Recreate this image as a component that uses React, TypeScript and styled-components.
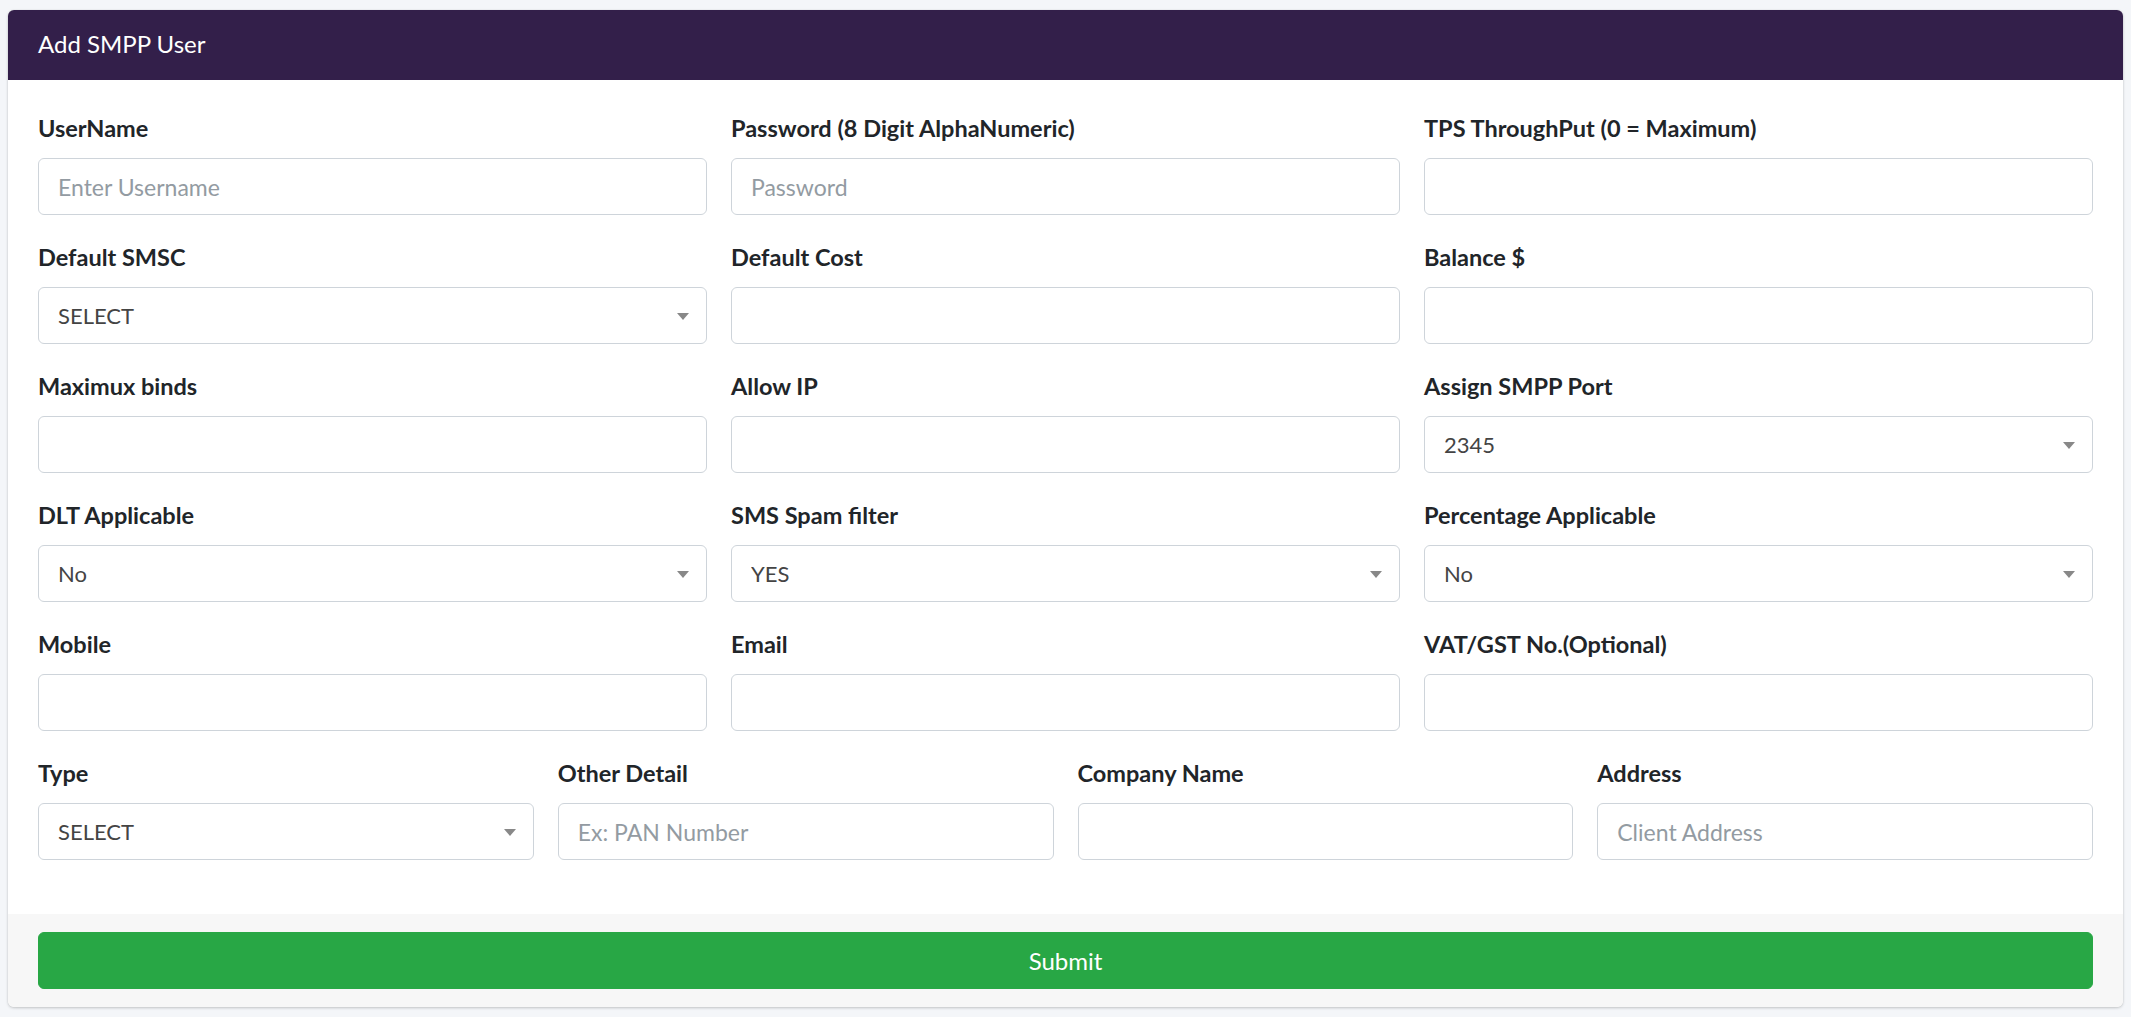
import styled, {createGlobalStyle} from "styled-components";

const GlobalStyle = createGlobalStyle`
  * {
    box-sizing: border-box;
  }
  html, body {
    margin: 0;
    padding: 0;
    background: #f4f6f9;
  }
  body {
    font-family: 'Lato', 'Liberation Sans', sans-serif;
    color: #212529;
  }
`

const Page = styled.div`
  padding: 10px 8px;
`

const Card = styled.form`
  background: #fff;
  border-radius: 6px;
  box-shadow: 0 0 1px rgba(0, 0, 0, .125), 0 1px 3px rgba(0, 0, 0, .2);
  overflow: hidden;
`

const CardHeader = styled.div`
  background: #331f4a;
  color: #fff;
  padding: 17px 30px 19px;
  height: 70px;
`

const CardTitle = styled.h3`
  margin: 0;
  font-size: 24px;
  font-weight: 400;
  line-height: 34px;
`

const CardBody = styled.div`
  padding: 30px 30px 30px;
`

const Row = styled.div<{ cols: number }>`
  display: grid;
  grid-template-columns: repeat(${(props) => props.cols}, 1fr);
  column-gap: 24px;
`

const Group = styled.div`
  margin-bottom: 24px;
`

const Label = styled.label`
  display: block;
  font-size: 23.5px;
  font-weight: 700;
  line-height: 36px;
  margin-bottom: 12px;
  white-space: nowrap;
`

const fieldBase = `
  display: block;
  width: 100%;
  height: 57px;
  padding: 0 19px;
  font-family: 'Lato', 'Liberation Sans', sans-serif;
  border: 1.5px solid #ced4da;
  border-radius: 6px;
  background: #fff;
  outline: none;
`

const Input = styled.input`
  ${fieldBase}
  font-size: 23px;
  color: #495057;

  &::placeholder {
    color: #939ba2;
  }
`

const SelectWrap = styled.div`
  position: relative;

  &::after {
    content: "";
    position: absolute;
    right: 18px;
    top: 50%;
    margin-top: -3px;
    border-style: solid;
    border-width: 7px 6px 0 6px;
    border-color: #888 transparent transparent transparent;
    pointer-events: none;
  }
`

const Select = styled.select`
  ${fieldBase}
  font-size: 22px;
  appearance: none;
  color: #444;
`

const CardFooter = styled.div`
  background: #f7f7f7;
  padding: 18px 30px;
`

const SubmitButton = styled.button`
  display: block;
  width: 100%;
  height: 57px;
  border: 1.5px solid #28a745;
  border-radius: 6px;
  background: #28a745;
  color: #fff;
  font-family: 'Lato', 'Liberation Sans', sans-serif;
  font-size: 24px;
  cursor: pointer;
`

type FieldDef = {
    label: string
    placeholder?: string
    options?: string[]
}

const rows: FieldDef[][] = [
    [
        {label: "UserName", placeholder: "Enter Username"},
        {label: "Password (8 Digit AlphaNumeric)", placeholder: "Password"},
        {label: "TPS ThroughPut (0 = Maximum)"},
    ],
    [
        {label: "Default SMSC", options: ["SELECT"]},
        {label: "Default Cost"},
        {label: "Balance $"},
    ],
    [
        {label: "Maximux binds"},
        {label: "Allow IP"},
        {label: "Assign SMPP Port", options: ["2345"]},
    ],
    [
        {label: "DLT Applicable", options: ["No", "Yes"]},
        {label: "SMS Spam filter", options: ["YES", "NO"]},
        {label: "Percentage Applicable", options: ["No", "Yes"]},
    ],
    [
        {label: "Mobile"},
        {label: "Email"},
        {label: "VAT/GST No.(Optional)"},
    ],
    [
        {label: "Type", options: ["SELECT"]},
        {label: "Other Detail", placeholder: "Ex: PAN Number"},
        {label: "Company Name"},
        {label: "Address", placeholder: "Client Address"},
    ],
]

const Field = ({field}: { field: FieldDef }) => {
    return (
        <Group>
            <Label>{field.label}</Label>
            {
                field.options
                    ? <SelectWrap>
                        <Select defaultValue={field.options[0]}>
                            {field.options.map((o) => <option key={o}>{o}</option>)}
                        </Select>
                    </SelectWrap>
                    : <Input type="text" placeholder={field.placeholder}/>
            }
        </Group>
    )
}

const App = () => {
    return (
        <Page>
            <GlobalStyle/>
            <Card onSubmit={(e) => e.preventDefault()}>
                <CardHeader>
                    <CardTitle>Add SMPP User</CardTitle>
                </CardHeader>
                <CardBody>
                    {rows.map((row, i) => (
                        <Row key={i} cols={row.length}>
                            {row.map((f) => <Field key={f.label} field={f}/>)}
                        </Row>
                    ))}
                </CardBody>
                <CardFooter>
                    <SubmitButton type="submit">Submit</SubmitButton>
                </CardFooter>
            </Card>
        </Page>
    )
}

export default App
